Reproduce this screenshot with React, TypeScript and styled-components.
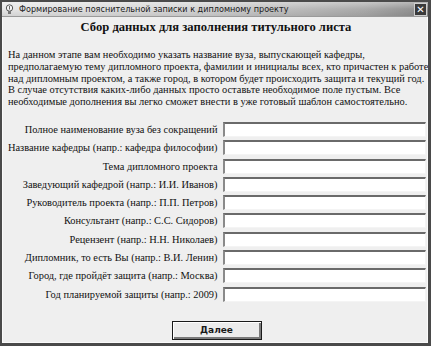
import React from "react";
import styled, { createGlobalStyle } from "styled-components";

const GlobalStyle = createGlobalStyle`
	html, body {
		margin: 0;
		padding: 0;
		background: #ffffff;
	}
`;

const fields = [
	"Полное наименование вуза без сокращений",
	"Название кафедры (напр.: кафедра философии)",
	"Тема дипломного проекта",
	"Заведующий кафедрой (напр.: И.И. Иванов)",
	"Руководитель проекта (напр.: П.П. Петров)",
	"Консультант (напр.: С.С. Сидоров)",
	"Рецензент (напр.: Н.Н. Николаев)",
	"Дипломник, то есть Вы (напр.: В.И. Ленин)",
	"Город, где пройдёт защита (напр.: Москва)",
	"Год планируемой защиты (напр.: 2009)",
];

const introLines = [
	"На данном этапе вам необходимо указать название вуза, выпускающей кафедры,",
	"предполагаемую тему дипломного проекта, фамилии и инициалы всех, кто причастен к работе",
	"над дипломным проектом, а также город, в котором будет происходить защита и текущий год.",
	"В случае отсутствия каких-либо данных просто оставьте необходимое поле пустым. Все",
	"необходимые дополнения вы легко сможет внести в уже готовый шаблон самостоятельно.",
];

const AppIcon = () => (
	<svg width="9" height="11" viewBox="0 0 9 11">
		<circle cx="4.5" cy="4" r="3.2" fill="#f4f4f4" stroke="#555" strokeWidth="1" />
		<rect x="3" y="7" width="3" height="3" fill="#777" />
		<line x1="4.5" y1="2" x2="4.5" y2="5.5" stroke="#666" strokeWidth="1" />
	</svg>
);

const App = () => {
	return (
		<>
			<GlobalStyle />
			<Window>
				<TitleBar>
					<AppIcon />
					<TitleText>Формирование пояснительной записки к дипломному проекту</TitleText>
					<CloseButton>✕</CloseButton>
				</TitleBar>
				<Body>
					<Heading>Сбор данных для заполнения титульного листа</Heading>
					<Intro>
						{introLines.map((line) => (
							<IntroLine key={line}>{line}</IntroLine>
						))}
					</Intro>
					<Form>
						{fields.map((label) => (
							<React.Fragment key={label}>
								<Label>{label}</Label>
								<Field type="text" />
							</React.Fragment>
						))}
					</Form>
					<ButtonRow>
						<NextButton>Далее</NextButton>
					</ButtonRow>
				</Body>
			</Window>
		</>
	);
};

const Window = styled.div`
	width: 431px;
	height: 346px;
	box-sizing: border-box;
	border: 2px solid #4a4a4a;
	border-bottom-width: 3px;
	border-right-width: 3px;
	background: #efefef;
	box-shadow: inset 1px 1px 0 #fafafa, inset -1px -1px 0 #fafafa;
	display: flex;
	flex-direction: column;
	overflow: hidden;
`;

const TitleBar = styled.div`
	height: 14px;
	flex: none;
	display: flex;
	align-items: center;
	gap: 5px;
	padding: 0 1px 0 3px;
	background:
		linear-gradient(to bottom, rgba(255, 255, 255, 0.35), rgba(255, 255, 255, 0) 50%, rgba(0, 0, 0, 0.08)),
		linear-gradient(to right, #e6e6e6 0%, #d4d4d4 45%, #ababab 85%, #8c8c8c 100%);
	border-bottom: 1px solid #9a9a9a;
`;

const TitleText = styled.div`
	flex: 1;
	font-family: "DejaVu Sans", sans-serif;
	font-size: 8.1px;
	color: #1a1a1a;
	white-space: nowrap;
`;

const CloseButton = styled.div`
	width: 13px;
	height: 13px;
	box-sizing: border-box;
	background: #3a3a3a;
	border: 1px solid #cfcfcf;
	color: #ffffff;
	font-family: "DejaVu Sans", sans-serif;
	font-size: 10px;
	font-weight: bold;
	line-height: 11px;
	text-align: center;
`;

const Body = styled.div`
	flex: 1;
	display: flex;
	flex-direction: column;
	padding: 3px 4px 0 6px;
	font-family: "Liberation Serif", "Times New Roman", serif;
	color: #111;
`;

const Heading = styled.div`
	font-size: 12.6px;
	font-weight: bold;
	line-height: 15px;
	text-align: center;
`;

const Intro = styled.div`
	margin-top: 14px;
	font-size: 10.4px;
	line-height: 11.8px;
`;

const IntroLine = styled.div`
	white-space: nowrap;
`;

const Form = styled.div`
	margin-top: 14px;
	display: grid;
	grid-template-columns: 1fr 203px;
	column-gap: 5px;
	row-gap: 3.3px;
	align-items: center;
`;

const Label = styled.div`
	font-size: 10.4px;
	line-height: 15px;
	text-align: right;
	white-space: nowrap;
`;

const Field = styled.input`
	height: 15px;
	box-sizing: border-box;
	margin: 0;
	padding: 0 2px;
	background: #ffffff;
	border-style: solid;
	border-width: 2px 1px 1px 2px;
	border-color: #6a6a6a #f4f4f4 #f4f4f4 #8a8a8a;
	outline: none;
`;

const ButtonRow = styled.div`
	display: flex;
	justify-content: center;
	margin-top: 19px;
`;

const NextButton = styled.button`
	width: 90px;
	height: 19px;
	box-sizing: border-box;
	margin: 0 0 0 1px;
	padding: 0;
	background: #ececec;
	border: 1px solid #1a1a1a;
	box-shadow: inset 1px 1px 0 #ffffff, inset -2px -2px 0 #7a7a7a;
	font-family: "DejaVu Sans", sans-serif;
	font-size: 9px;
	font-weight: bold;
	color: #1a1a1a;
`;

export default App;
